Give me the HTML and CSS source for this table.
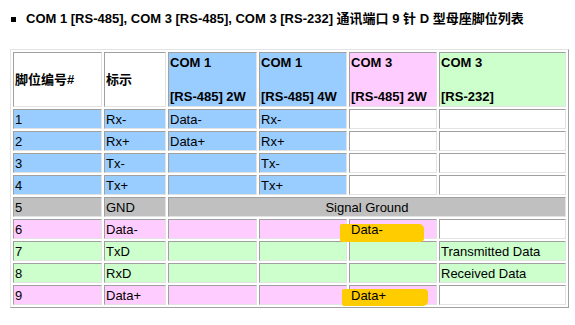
FILE: index.html
```html
<!DOCTYPE html>
<html lang="zh-CN">
<head>
<meta charset="utf-8">
<title>COM 端口脚位列表</title>
<link rel="stylesheet" href="styles.css">
</head>
<body>
<div class="page">
  <div class="title"><span class="bullet"></span>COM 1 [RS-485], COM 3 [RS-485], COM 3 [RS-232] 通讯端口 9 针 D 型母座脚位列表</div>
  <table class="pins">
    <thead>
      <tr>
        <th class="w1 mid">脚位编号#</th>
        <th class="w2 mid">标示</th>
        <th class="w3 blue">COM 1<br><br>[RS-485] 2W</th>
        <th class="w4 blue">COM 1<br><br>[RS-485] 4W</th>
        <th class="w5 pink">COM 3<br><br>[RS-485] 2W</th>
        <th class="w6 green">COM 3<br><br>[RS-232]</th>
      </tr>
    </thead>
    <tbody>
      <tr class="blue"><td>1</td><td>Rx-</td><td>Data-</td><td>Rx-</td><td class="white"></td><td class="white"></td></tr>
      <tr class="blue"><td>2</td><td>Rx+</td><td>Data+</td><td>Rx+</td><td class="white"></td><td class="white"></td></tr>
      <tr class="blue"><td>3</td><td>Tx-</td><td></td><td>Tx-</td><td class="white"></td><td class="white"></td></tr>
      <tr class="blue"><td>4</td><td>Tx+</td><td></td><td>Tx+</td><td class="white"></td><td class="white"></td></tr>
      <tr class="gray"><td>5</td><td>GND</td><td colspan="4" class="center">Signal Ground</td></tr>
      <tr class="pink"><td>6</td><td>Data-</td><td></td><td></td><td class="marked"><span class="mark mark-a"></span><span class="txt">Data-</span></td><td class="white"></td></tr>
      <tr class="green"><td>7</td><td>TxD</td><td></td><td></td><td></td><td>Transmitted Data</td></tr>
      <tr class="green"><td>8</td><td>RxD</td><td></td><td></td><td></td><td>Received Data</td></tr>
      <tr class="pink"><td>9</td><td>Data+</td><td></td><td></td><td class="marked"><span class="mark mark-b"></span><span class="txt">Data+</span></td><td class="white"></td></tr>
    </tbody>
  </table>
</div>
</body>
</html>
```
FILE: styles.css
```css
html, body {
  margin: 0;
  padding: 0;
  background: #ffffff;
}

body {
  font-family: "Liberation Sans", Arial, "Noto Sans CJK SC", sans-serif;
  font-size: 13px;
  color: #000000;
}

.page {
  padding: 11px 0 0 10px;
}

.title {
  display: flex;
  align-items: center;
  font-weight: bold;
  line-height: 16px;
  height: 16px;
  margin: 0 0 22px 1px;
  white-space: nowrap;
}

.bullet {
  display: inline-block;
  width: 5px;
  height: 5px;
  background: #000000;
  margin-right: 10px;
}

.pins {
  table-layout: fixed;
  width: 559px;
  border-collapse: separate;
  border-spacing: 2px;
  border: 1px solid;
  border-color: #e3e3e3 #a0a0a0 #a0a0a0 #e3e3e3;
}

.pins th,
.pins td {
  box-sizing: border-box;
  border: 1px solid;
  border-color: #a0a0a0 #e3e3e3 #e3e3e3 #a0a0a0;
  text-align: left;
  vertical-align: middle;
  white-space: nowrap;
}

.pins th {
  font-weight: bold;
  line-height: 17px;
  padding: 1px;
  vertical-align: top;
  background: #ffffff;
}

.pins th.mid {
  vertical-align: middle;
}

.pins td {
  line-height: 16px;
  height: 20px;
  padding: 2px 1px 0 1px;
}

.w1 { width: 89px; }
.w2 { width: 62px; }
.w3 { width: 89px; }
.w4 { width: 88px; }
.w5 { width: 88px; }
.w6 { width: 127px; }

.pins th.blue,
tr.blue td { background: #99ccff; }

.pins th.pink,
tr.pink td { background: #ffccff; }

.pins th.green,
tr.green td { background: #ccffcc; }

tr.gray td { background: #c0c0c0; }

.pins tr td.white { background: #ffffff; }

.pins td.center { text-align: center; }

.pins td.marked {
  position: relative;
}

.mark {
  position: absolute;
  background: #ffcc00;
}

.mark-a {
  left: -10px;
  top: 4px;
  width: 84px;
  height: 18px;
  border-radius: 2px 5px 4px 2px;
}

.mark-b {
  left: -8px;
  top: 3px;
  width: 86px;
  height: 17px;
  border-radius: 2px 4px 5px 2px;
}

.txt {
  position: relative;
}
```
